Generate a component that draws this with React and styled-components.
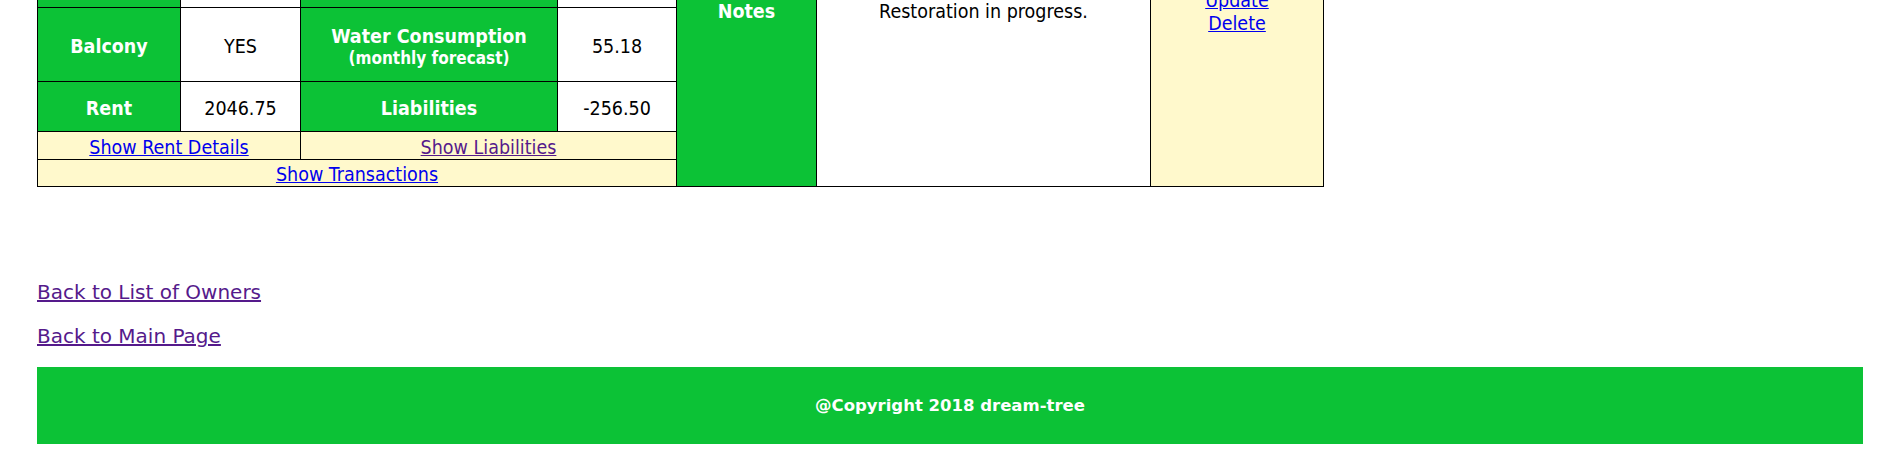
import React from "react";
import styled, { createGlobalStyle } from "styled-components";

const GREEN = "#0cc236";
const CREAM = "#fff9cc";
const LINK = "#0000ee";
const VISITED = "#551a8b";

const Global = createGlobalStyle`
  html, body { margin: 0; padding: 0; background: #fff; }
  body { font-family: "DejaVu Sans Condensed", "DejaVu Sans", sans-serif; }
`;

/* The page is shown scrolled down: the upper rows of the detail table sit above the viewport. */
const Page = styled.div`
  display: flex;
  flex-direction: column;
  align-items: flex-start;
  padding: 0 35px 0 37px;
  margin-top: -164px;
`;

const DetailGrid = styled.div`
  display: grid;
  grid-template-columns: 142px 119px 256px 118px 139px 333px 172px;
  grid-template-rows: 170px 73px 49px 27px 26px;
  gap: 1px;
  padding: 1px;
  background: #000;
  font-family: "DejaVu Sans Condensed", "DejaVu Sans", sans-serif;
  font-stretch: condensed;
  font-size: 19.5px;
`;

const tones = {
  head: { bg: GREEN, fg: "#fff", weight: 700 },
  value: { bg: "#fff", fg: "#000", weight: 400 },
  action: { bg: CREAM, fg: "#000", weight: 400 },
};

const Cell = styled.div`
  display: flex;
  flex-direction: column;
  align-items: center;
  justify-content: center;
  box-sizing: border-box;
  padding-top: 3px;
  text-align: center;
  background: ${(p) => tones[p.$tone].bg};
  color: ${(p) => tones[p.$tone].fg};
  font-weight: ${(p) => tones[p.$tone].weight};
  grid-column: ${(p) => p.$col || "auto"};
  grid-row: ${(p) => p.$row || "auto"};
`;

/* Notes / text / actions columns span every row of the detail grid. */
const SideCell = styled(Cell)`
  padding-top: 0;
  grid-row: 1 / 6;
`;

const Small = styled.span`
  display: block;
  font-size: 17px;
`;

const CellLink = styled.a`
  color: ${(p) => (p.$visited ? VISITED : LINK)};
  text-decoration: underline;
  cursor: pointer;
`;

const BackLinks = styled.nav`
  display: flex;
  flex-direction: column;
  gap: 19px;
  margin-top: 93px;
  font-family: "DejaVu Sans", Verdana, sans-serif;
  font-size: 20px;
  line-height: 25px;
`;

const BackLink = styled.a`
  color: ${VISITED};
  text-decoration: underline;
  cursor: pointer;
`;

const Footer = styled.footer`
  align-self: stretch;
  height: 77px;
  margin-top: 18px;
  display: flex;
  align-items: center;
  justify-content: center;
  background: ${GREEN};
  color: #fff;
  font-family: "DejaVu Sans", Verdana, sans-serif;
  font-weight: 700;
  font-size: 16.5px;
`;

export default function App() {
  return (
    <>
      <Global />
      <Page>
        <DetailGrid>
          <SideCell $tone="head" $col="5">Notes</SideCell>
          <SideCell $tone="value" $col="6">Restoration in progress.</SideCell>
          <SideCell $tone="action" $col="7">
            <CellLink href="#update">Update</CellLink>
            <CellLink href="#delete">Delete</CellLink>
          </SideCell>

          <Cell $tone="head" />
          <Cell $tone="value" />
          <Cell $tone="head" />
          <Cell $tone="value" />

          <Cell $tone="head">Balcony</Cell>
          <Cell $tone="value">YES</Cell>
          <Cell $tone="head">
            Water Consumption
            <Small>(monthly forecast)</Small>
          </Cell>
          <Cell $tone="value">55.18</Cell>

          <Cell $tone="head">Rent</Cell>
          <Cell $tone="value">2046.75</Cell>
          <Cell $tone="head">Liabilities</Cell>
          <Cell $tone="value">-256.50</Cell>

          <Cell $tone="action" $col="span 2">
            <CellLink href="#rent">Show Rent Details</CellLink>
          </Cell>
          <Cell $tone="action" $col="span 2">
            <CellLink href="#liabilities" $visited>Show Liabilities</CellLink>
          </Cell>

          <Cell $tone="action" $col="span 4">
            <CellLink href="#transactions">Show Transactions</CellLink>
          </Cell>
        </DetailGrid>

        <BackLinks>
          <BackLink href="#owners">Back to List of Owners</BackLink>
          <BackLink href="#main">Back to Main Page</BackLink>
        </BackLinks>

        <Footer>@Copyright 2018 dream-tree</Footer>
      </Page>
    </>
  );
}
